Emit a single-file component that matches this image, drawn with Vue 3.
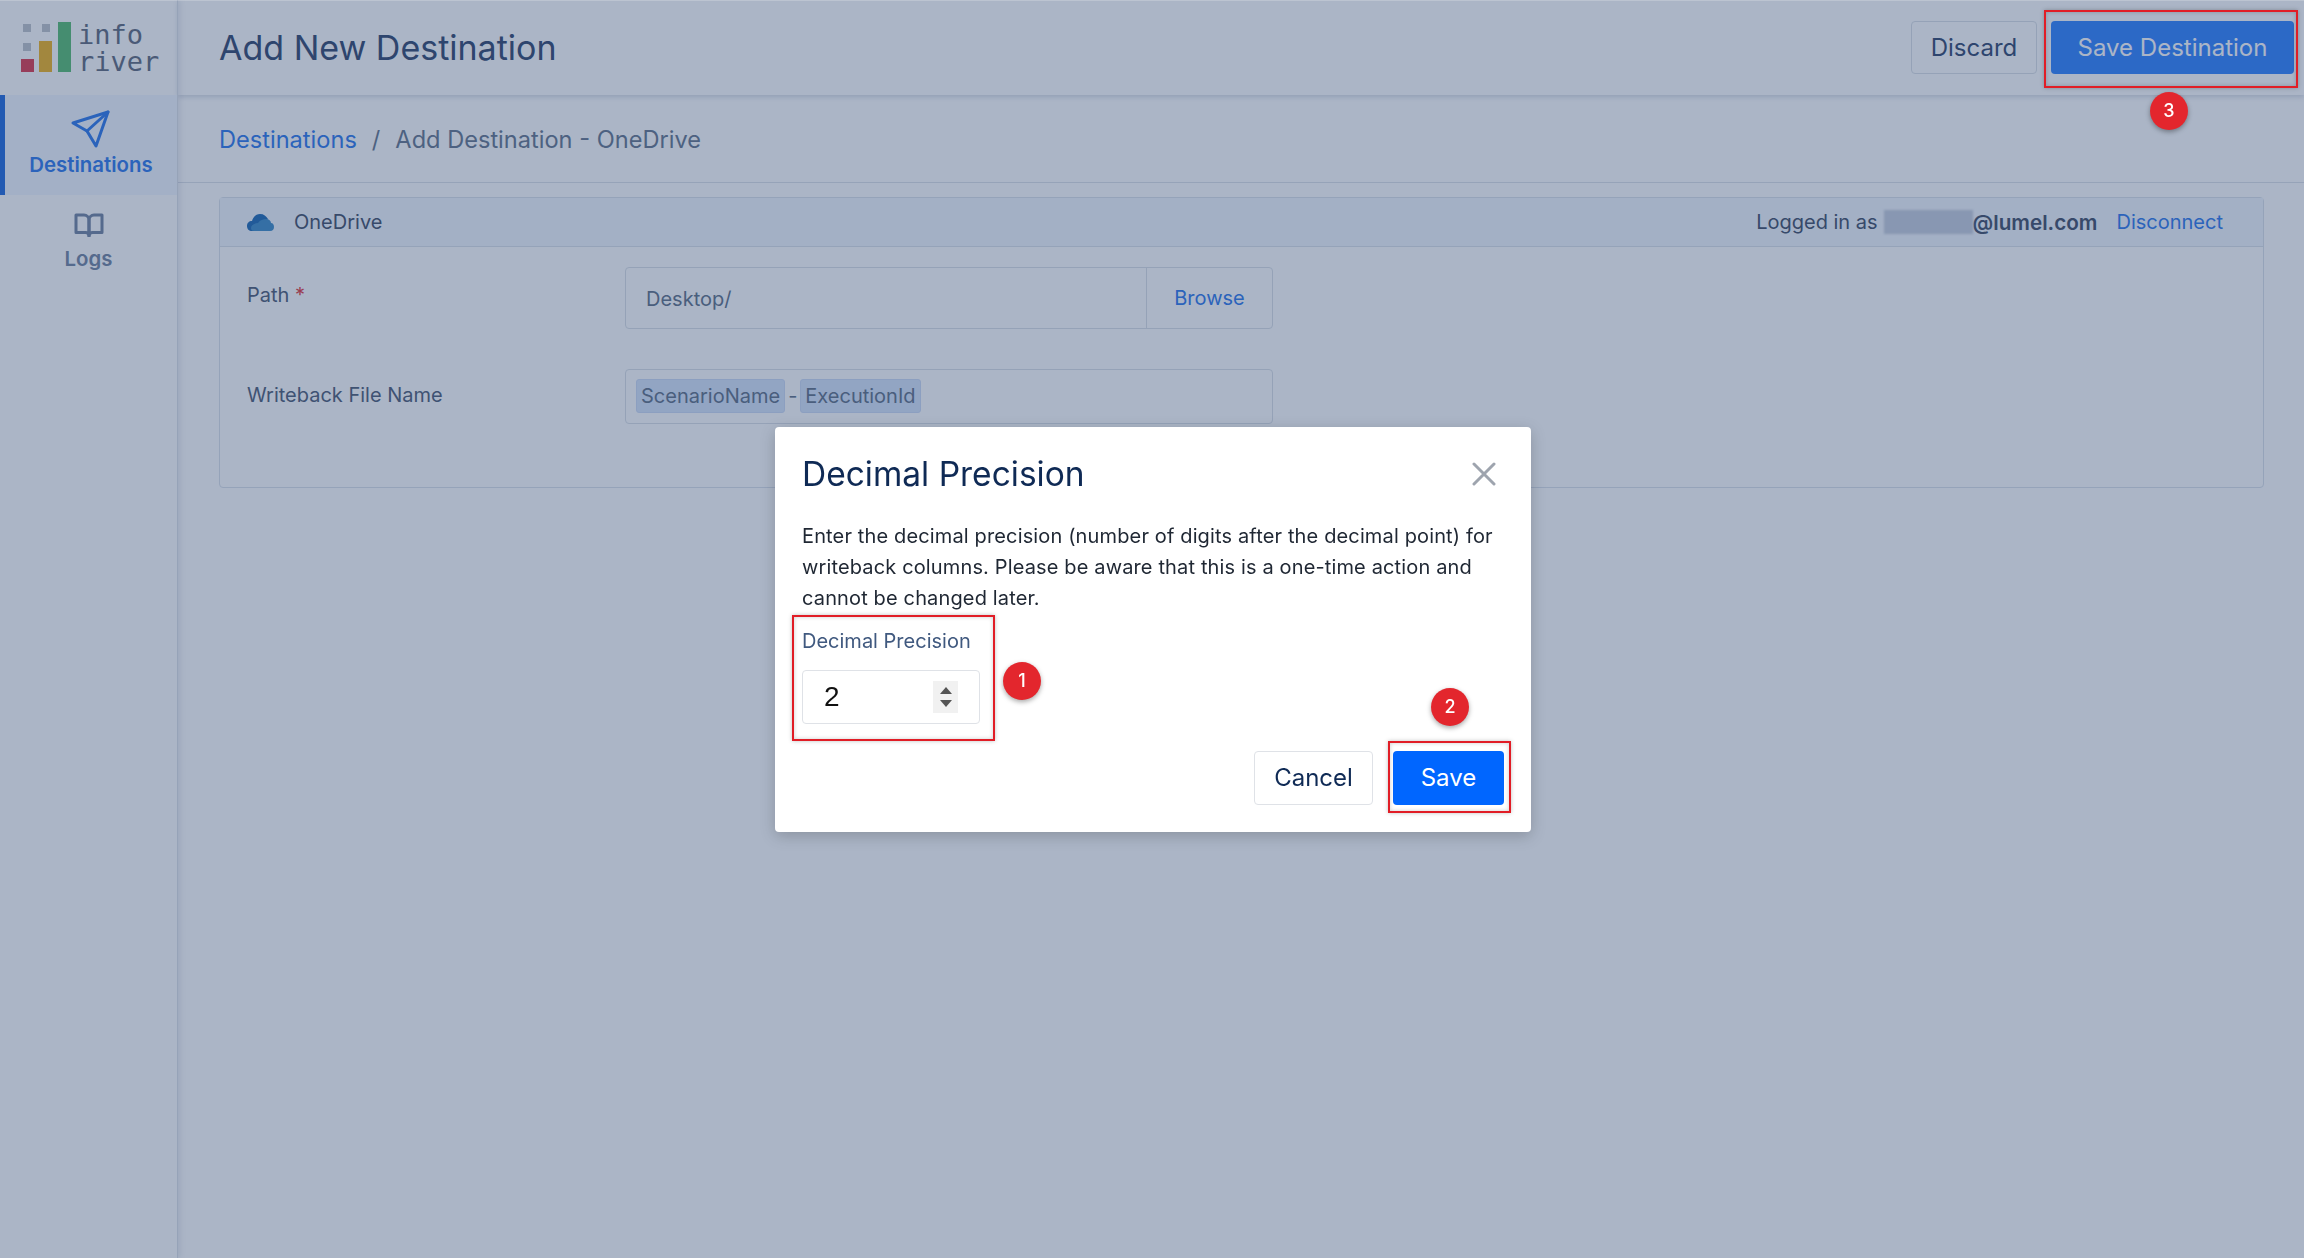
<script setup>
import { ref } from 'vue'

const path = ref('Desktop/')
const precision = ref(2)
const description =
  'Enter the decimal precision (number of digits after the decimal point) for writeback columns. Please be aware that this is a one-time action and cannot be changed later.'
</script>

<template>
  <div class="shell">
    <!-- Sidebar -->
    <aside class="sidebar">
      <div class="logo">
        <div class="logo-mark">
          <span class="sq sq-a"></span>
          <span class="sq sq-b"></span>
          <span class="sq sq-c"></span>
          <span class="bar bar-red"></span>
          <span class="bar bar-yellow"></span>
          <span class="bar bar-green"></span>
        </div>
        <div class="logo-text">info<br />river</div>
      </div>
      <nav class="nav">
        <a class="nav-item active">
          <svg width="40" height="40" viewBox="0 0 40 40" fill="none" stroke="currentColor" stroke-width="3" stroke-linejoin="round" stroke-linecap="round">
            <path d="M37 3 2 14l14 8 9 15z" />
            <path d="M37 3 16 22" />
          </svg>
          <span>Destinations</span>
        </a>
        <a class="nav-item">
          <svg width="30" height="24" viewBox="0 0 30 24" fill="none" stroke="currentColor" stroke-width="3" stroke-linejoin="round">
            <path d="M2 2h8a5 5 0 0 1 5 5v16a3.5 3.5 0 0 0-3.500-3.500H2z" />
            <path d="M28 2h-8a5 5 0 0 0-5 5v16a3.500 3.500 0 0 1 3.500-3.500H28z" />
          </svg>
          <span>Logs</span>
        </a>
      </nav>
    </aside>

    <!-- Main -->
    <main class="main">
      <header class="topbar">
        <h1 class="page-title">Add New Destination</h1>
        <div class="actions">
          <button class="btn btn-outline">Discard</button>
          <div class="marked">
            <button class="btn btn-primary">Save Destination</button>
            <span class="mark mark-save-dest"></span>
            <span class="badge badge-3">3</span>
          </div>
        </div>
      </header>

      <div class="breadcrumb">
        <a class="crumb-link">Destinations</a>
        <span class="crumb-sep">/</span>
        <span class="crumb-current">Add Destination - OneDrive</span>
      </div>

      <section class="card">
        <div class="card-head">
          <svg class="cloud" width="27" height="19" viewBox="0 0 27 19">
            <path fill="#2b73ba" d="M5 18C2 18 0 16 0 13s2-5 5-5c1-4 4-7 8-7s6 2 8 5l-6 7-7 5z" />
            <path fill="#4a94cc" d="M7 18c-2 0-3-1-3-3 0-3 4-5 7-5 2-3 5-4 8-4 3 0 5 2 5 4 2 0 3 2 3 4s-1 4-4 4z" />
          </svg>
          <span class="provider">OneDrive</span>
          <div class="account">
            <span>Logged in as</span>
            <span class="email"><span class="blurred"></span>@lumel.com</span>
            <a class="link">Disconnect</a>
          </div>
        </div>
        <div class="card-body">
          <div class="row row-path">
            <label class="row-label">Path <span class="req">*</span></label>
            <div class="path-input">
              <input class="path-value" :value="path" readonly />
              <button class="browse">Browse</button>
            </div>
          </div>
          <div class="row row-file">
            <label class="row-label">Writeback File Name</label>
            <div class="tag-input">
              <span class="tag">ScenarioName</span>
              <span class="dash">-</span>
              <span class="tag">ExecutionId</span>
            </div>
          </div>
        </div>
      </section>
    </main>

    <!-- Modal -->
    <div class="backdrop">
      <div class="modal">
        <div class="modal-head">
          <h2 class="modal-title">Decimal Precision</h2>
          <svg class="close" width="24" height="24" viewBox="0 0 24 24" stroke="#9ea4ae" stroke-width="3" stroke-linecap="round">
            <path d="M2 2l20 20M22 2 2 22" />
          </svg>
        </div>
        <p class="modal-text">{{ description }}</p>
        <div class="precision marked">
          <label class="precision-label">Decimal Precision</label>
          <div class="number-input">
            <span class="number-value">{{ precision }}</span>
            <span class="spinner">
              <i class="arrow-up"></i>
              <i class="arrow-down"></i>
            </span>
          </div>
          <span class="mark mark-precision"></span>
          <span class="badge badge-1">1</span>
        </div>
        <div class="modal-foot">
          <button class="btn btn-cancel">Cancel</button>
          <div class="marked">
            <button class="btn btn-save">Save</button>
            <span class="mark mark-save"></span>
            <span class="badge badge-2">2</span>
          </div>
        </div>
      </div>
    </div>
  </div>
</template>

<style>
html,
body {
  margin: 0;
  background: #fff;
}
</style>

<style scoped>
.shell {
  display: flex;
  height: 1258px;
  overflow: hidden;
  font-family: Inter, "Noto Sans", sans-serif;
  font-size: 20px;
  color: #4d5a72;
  background: #fff;
}

/* Sidebar */
.sidebar {
  width: 177px;
  flex-shrink: 0;
  border-right: 1px solid #dfe3ea;
  box-shadow: 2px 0 6px rgba(15, 44, 92, 0.1);
  z-index: 2;
}

.logo {
  height: 95px;
  box-sizing: border-box;
  padding: 22px 0 0 21px;
  display: flex;
  gap: 7px;
}

.logo-mark {
  position: relative;
  width: 50px;
  height: 50px;
}

.sq {
  position: absolute;
  width: 8px;
  height: 8px;
  background: #c4c8ce;
}

.sq-a { left: 2px; top: 2px; }
.sq-b { left: 21px; top: 2px; }
.sq-c { left: 2px; top: 21px; }

.bar {
  position: absolute;
  bottom: 0;
  width: 13px;
}

.bar-red { left: 0; height: 13px; background: #e0475a; }
.bar-yellow { left: 18px; height: 31px; background: #f2b92e; }
.bar-green { left: 37px; height: 50px; background: #63c27c; }

.logo-text {
  font-family: "DejaVu Sans Mono", monospace;
  font-size: 27px;
  line-height: 27px;
  color: #6a7486;
  margin-top: -1px;
}

.nav-item {
  display: flex;
  flex-direction: column;
  align-items: center;
  height: 100px;
  box-sizing: border-box;
  padding-top: 18px;
  font-size: 20.4px;
  font-weight: 600;
  color: #7b8ca8;
}

.nav-item span {
  margin-top: 10px;
  line-height: 24px;
}

.nav-item.active {
  border-left: 5px solid #2f74e0;
  background: #f3f8ff;
  color: #3b82ee;
  padding-top: 14px;
}

.nav-item.active span {
  margin-top: 4px;
}

/* Main */
.main {
  flex: 1;
  min-width: 0;
}

.topbar {
  height: 95px;
  box-sizing: border-box;
  padding: 21px 10px 0 41px;
  display: flex;
  justify-content: space-between;
  box-shadow: 0 2px 5px rgba(15, 44, 92, 0.16);
  position: relative;
}

.page-title {
  margin: 0;
  font-size: 34px;
  font-weight: 400;
  line-height: 53px;
  color: #3f5378;
}

.actions {
  display: flex;
  align-items: flex-start;
  gap: 14px;
}

.btn {
  display: block;
  height: 53px;
  border-radius: 4px;
  font-family: inherit;
  font-size: 24px;
  box-sizing: border-box;
}

.btn-outline {
  width: 126px;
  background: #fff;
  border: 1px solid #dde2e9;
  color: #3f5378;
}

.btn-primary {
  width: 243px;
  background: #3d8bff;
  border: none;
  color: #fff;
}

.marked {
  position: relative;
}

.mark {
  position: absolute;
  border: 2px solid #e11d26;
  box-shadow: 0 0 4px rgba(0, 0, 0, 0.25), inset 0 0 4px rgba(0, 0, 0, 0.2);
  pointer-events: none;
  z-index: 20;
}

.mark-save-dest { inset: -11px -4px -14px -7px; }
.mark-save { inset: -10px -7px -8px -5px; }
.mark-precision { left: -10px; top: -14px; width: 203px; height: 126px; box-sizing: border-box; }

.badge {
  position: absolute;
  width: 38px;
  height: 38px;
  border-radius: 50%;
  background: #e3262d;
  color: #fff;
  font-size: 18px;
  font-weight: 500;
  line-height: 38px;
  text-align: center;
  box-shadow: 0 2px 5px rgba(0, 0, 0, 0.35);
  z-index: 21;
}

.badge-3 { left: 99px; top: 71px; }
.badge-2 { left: 38px; top: -63px; }
.badge-1 { left: 201px; top: 33px; }

/* Breadcrumb */
.breadcrumb {
  height: 88px;
  box-sizing: border-box;
  padding: 2px 41px 0;
  display: flex;
  align-items: center;
  gap: 15px;
  font-size: 23.6px;
  border-bottom: 1px solid #dfe3ea;
}

.crumb-link,
.link {
  color: #3b82ee;
}

.crumb-sep,
.crumb-current {
  color: #6f7f95;
}

/* Card */
.card {
  margin: 14px 40px 0 41px;
  height: 291px;
  box-sizing: border-box;
  border: 1px solid #dde3ec;
  border-radius: 4px;
}

.card-head {
  height: 49px;
  box-sizing: border-box;
  padding: 0 40px 0 27px;
  display: flex;
  align-items: center;
  background: #f3f7fd;
  border-bottom: 1px solid #dde3ec;
}

.provider {
  margin-left: 20px;
}

.account {
  margin-left: auto;
  display: flex;
  align-items: center;
  gap: 19px;
}

.email {
  margin-left: -13px;
  font-size: 20.7px;
  font-weight: 600;
  display: flex;
  align-items: center;
}

.blurred {
  width: 89px;
  height: 24px;
  background: #c9d2e0;
  filter: blur(1px);
}

.card-body {
  padding: 20px 27px 0;
}

.row {
  display: flex;
}

.row-label {
  width: 378px;
  flex-shrink: 0;
  line-height: 56px;
  color: #5a6880;
}

.req {
  color: #e5484d;
}

.path-input {
  width: 648px;
  height: 62px;
  box-sizing: border-box;
  display: flex;
  border: 1px solid #dde2e9;
  border-radius: 4px;
}

.path-value {
  flex: 1;
  min-width: 0;
  border: none;
  outline: none;
  background: transparent;
  padding: 2px 20px 0;
  font: inherit;
  color: #6a7a90;
}

.browse {
  width: 126px;
  background: transparent;
  border: none;
  border-left: 1px solid #dde2e9;
  font: inherit;
  color: #3b82ee;
}

.row-file {
  margin-top: 40px;
}

.row-file .row-label {
  line-height: 52px;
}

.tag-input {
  width: 648px;
  height: 55px;
  box-sizing: border-box;
  display: flex;
  align-items: center;
  gap: 3px;
  padding-left: 10px;
  padding-bottom: 2px;
  border: 1px solid #dde2e9;
  border-radius: 4px;
  color: #6a7a90;
}

.tag {
  height: 32px;
  line-height: 32px;
  padding: 0 4px;
  background: #d9e6fb;
  border: 1px solid #cfdef6;
  border-radius: 3px;
}

/* Modal */
.backdrop {
  position: fixed;
  inset: 0;
  z-index: 10;
  display: flex;
  align-items: center;
  justify-content: center;
  box-sizing: border-box;
  border-top: 1px solid rgba(255, 255, 255, 0.2);
  background: rgba(15, 44, 92, 0.35);
}

.modal {
  width: 756px;
  height: 405px;
  margin-left: 2px;
  box-sizing: border-box;
  padding: 27px;
  background: #fff;
  border-radius: 4px;
  box-shadow: 0 4px 16px rgba(0, 0, 0, 0.2);
  color: #1f2733;
}

.modal-head {
  height: 40px;
  display: flex;
  align-items: center;
  justify-content: space-between;
}

.modal-title {
  margin: 0;
  font-size: 33.5px;
  font-weight: 400;
  color: #0f2a55;
}

.close {
  margin-right: 8px;
}

.modal-text {
  margin: 27px 0 0;
  line-height: 31px;
  letter-spacing: 0.14px;
}

.precision {
  margin-top: 15px;
  width: 178px;
}

.precision-label {
  display: block;
  line-height: 24px;
  color: #40597f;
}

.number-input {
  margin-top: 17px;
  height: 54px;
  box-sizing: border-box;
  border: 1px solid #dfe2e7;
  border-radius: 4px;
  display: flex;
  align-items: center;
  justify-content: space-between;
  padding-left: 21px;
  padding-right: 21px;
}

.number-value {
  font-family: "Liberation Sans", Arial, sans-serif;
  font-size: 28px;
  color: #111;
}

.spinner {
  width: 25px;
  height: 32px;
  background: #f1f1f1;
  display: flex;
  flex-direction: column;
  align-items: center;
  justify-content: center;
  gap: 6px;
}

.arrow-up,
.arrow-down {
  width: 0;
  height: 0;
  border-left: 6px solid transparent;
  border-right: 6px solid transparent;
}

.arrow-up {
  border-bottom: 7px solid #555;
}

.arrow-down {
  border-top: 7px solid #555;
}

.modal-foot {
  margin-top: 27px;
  display: flex;
  justify-content: flex-end;
  gap: 20px;
}

.btn-cancel {
  width: 119px;
  height: 54px;
  padding-bottom: 3px;
  background: #fff;
  border: 1px solid #dfe2e7;
  color: #0f2a55;
}

.btn-save {
  width: 111px;
  height: 54px;
  padding-bottom: 3px;
  background: #0066ff;
  border: none;
  color: #fff;
}
</style>
